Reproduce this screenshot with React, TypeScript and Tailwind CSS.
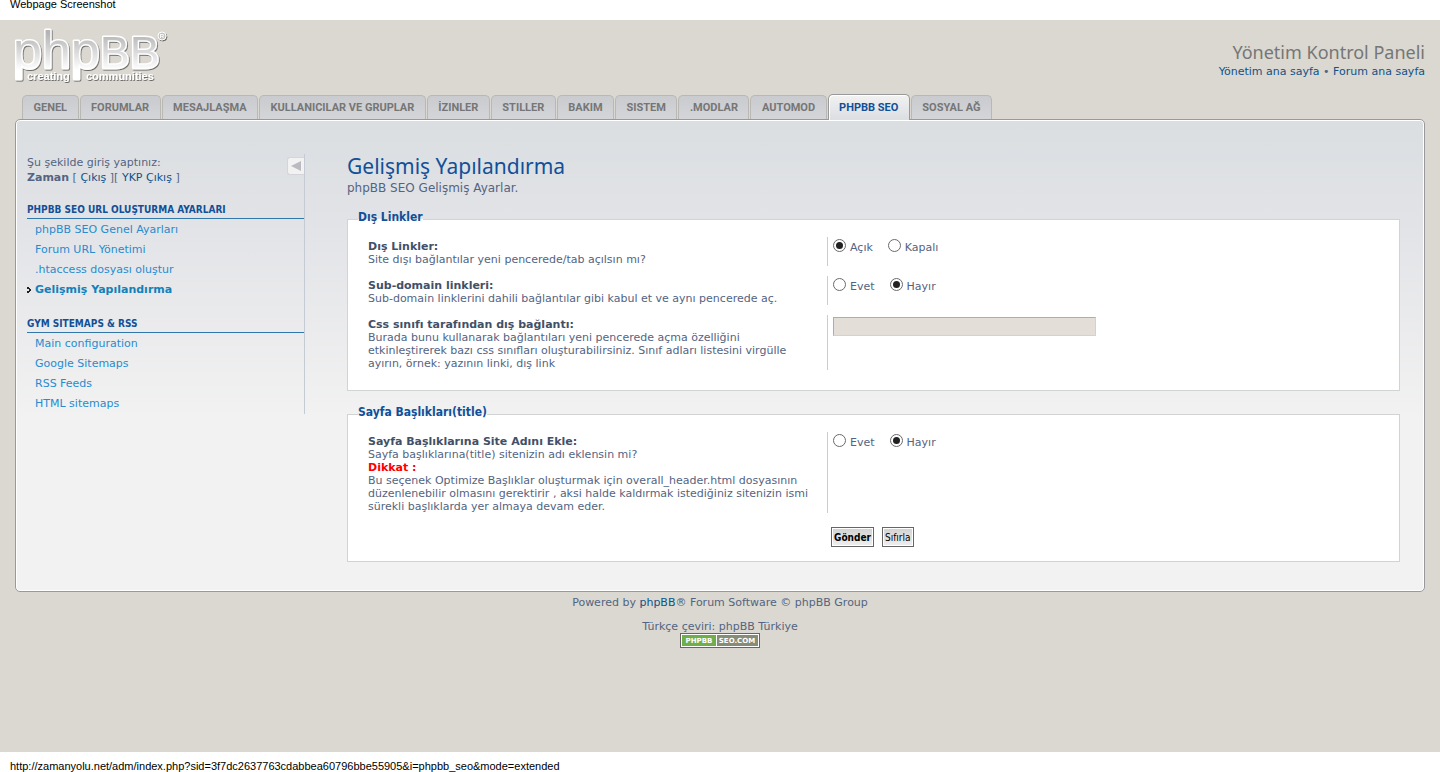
import React from "react";

const tabs = [
  "GENEL",
  "FORUMLAR",
  "MESAJLAŞMA",
  "KULLANICILAR VE GRUPLAR",
  "İZINLER",
  "STILLER",
  "BAKIM",
  "SISTEM",
  ".MODLAR",
  "AUTOMOD",
  "PHPBB SEO",
  "SOSYAL AĞ",
];

const menus = [
  {
    title: "PHPBB SEO URL OLUŞTURMA AYARLARI",
    items: ["phpBB SEO Genel Ayarları", "Forum URL Yönetimi", ".htaccess dosyası oluştur", "Gelişmiş Yapılandırma"],
  },
  {
    title: "GYM SITEMAPS & RSS",
    items: ["Main configuration", "Google Sitemaps", "RSS Feeds", "HTML sitemaps"],
  },
];

function Logo() {
  return (
    <svg width="158" height="66" viewBox="-2 -10 158 66" role="img" aria-label="phpBB creating communities">
      <defs>
        <linearGradient id="face" x1="0" y1="3" x2="0" y2="40" gradientUnits="userSpaceOnUse">
          <stop offset="0" stopColor="#b4b4b4" />
          <stop offset="1" stopColor="#ffffff" />
        </linearGradient>
        <filter id="drop" x="-5%" y="-5%" width="110%" height="120%">
          <feDropShadow dx="0.8" dy="1" stdDeviation="0.5" floodColor="#555555" floodOpacity="0.85" />
        </filter>
      </defs>
      <g filter="url(#drop)" fontFamily="'Liberation Sans', sans-serif">
        <text
          x="-2"
          y="38"
          fontSize="52"
          fill="url(#face)"
          stroke="#ffffff"
          strokeWidth="3"
          strokeLinejoin="round"
          paintOrder="stroke"
        >
          php<tspan fontSize="45">BB</tspan>
        </text>
        <circle cx="147" cy="6" r="4" fill="#c4c3be" stroke="#ffffff" />
        <text x="147" y="8" fontSize="6" fontWeight="bold" textAnchor="middle" fill="#ffffff">
          R
        </text>
      </g>
      <g filter="url(#drop)" fontFamily="'Liberation Sans', sans-serif" fontSize="11" fontWeight="bold" fill="#ffffff">
        <text x="12" y="50">
          creating
        </text>
        <text x="71" y="50">
          communities
        </text>
      </g>
    </svg>
  );
}

function Radio({ name, label, checked }: { name: string; label: string; checked?: boolean }) {
  return (
    <label className="flex items-start gap-1">
      <input
        type="radio"
        name={name}
        defaultChecked={checked}
        className="m-0 grid size-[13px] appearance-none place-items-center rounded-full border border-[#6a6a6a] bg-white before:size-[7px] before:rounded-full checked:before:bg-[#222222]"
      />
      <span className="leading-[18px]">{label}</span>
    </label>
  );
}

function Row({
  title,
  htmlFor,
  lines,
  children,
}: {
  title: string;
  htmlFor?: string;
  lines: React.ReactNode[];
  children: React.ReactNode;
}) {
  return (
    <dl className="mb-[10px] flex">
      <dt className="w-[45%] shrink-0 whitespace-nowrap pt-[3px] leading-[13px]">
        <label htmlFor={htmlFor} className="block font-bold text-[#425067]">
          {title}
        </label>
        {lines.map((line, i) => (
          <span key={i} className="block">
            {line}
          </span>
        ))}
      </dt>
      <dd className="flex flex-1 items-start gap-[15px] border-l border-[#cccccc] pl-[5px] pt-[2px]">{children}</dd>
    </dl>
  );
}

const fieldset = "min-w-0 border border-[#d2d4d4] bg-white pl-5 pr-[11px]";
const legend =
  "-ml-[10px] pb-1 font-['DejaVu_Sans_Condensed','DejaVu_Sans',sans-serif] text-xs leading-4 font-bold text-[#115098]";
const button =
  "h-5 border border-[#666666] bg-linear-to-b from-[#d2d2d2] to-[#efefef] px-[2px] font-['DejaVu_Sans_Condensed','DejaVu_Sans',sans-serif] text-[10px] text-black shadow-[inset_0_0_0_1px_#ffffff]";

export default function App() {
  return (
    <div className="flex min-h-screen flex-col bg-white font-['DejaVu_Sans',sans-serif] text-[11px] text-[#536482]">
      <div className="h-5 px-[10px] font-['Liberation_Sans',sans-serif] leading-2 text-black">Webpage Screenshot</div>

      <div className="flex-1 bg-[#dad8d0] px-[15px]">
        <header className="flex h-[74px] items-start justify-between">
          <a href="#home" className="-ml-[2px]">
            <Logo />
          </a>
          <div className="pt-5 text-right">
            <h1 className="font-['Noto_Sans',sans-serif] text-lg leading-6 text-[#767676]">Yönetim Kontrol Paneli</h1>
            <p className="leading-4">
              <a href="#admin" className="text-[#105289]">
                Yönetim ana sayfa
              </a>{" "}
              •{" "}
              <a href="#forum" className="text-[#105289]">
                Forum ana sayfa
              </a>
            </p>
          </div>
        </header>

        <nav className="relative z-10 -mb-px ml-[7px] flex w-[970px] items-end gap-px font-[Roboto,sans-serif] font-bold">
          {tabs.map((tab) =>
            tab === "PHPBB SEO" ? (
              <a
                key={tab}
                href="#tab"
                aria-current="page"
                className="flex h-[26px] grow items-center justify-center rounded-t-[5px] border border-b-0 border-[#999999] bg-linear-to-b from-[#f2f2f2] to-[#dbdee2] px-[10px] pt-[2px] text-[#115098] shadow-[inset_1px_1px_0_#ffffff]"
              >
                {tab}
              </a>
            ) : (
              <a
                key={tab}
                href="#tab"
                className="mb-px flex h-6 grow items-center justify-center rounded-t-[5px] border border-b-0 border-[#b9b8b4] bg-linear-to-b from-[#c9cbcf] to-[#d3d5d9] px-[10px] pt-[2px] text-[#767676]"
              >
                {tab}
              </a>
            ),
          )}
        </nav>

        <div className="flex rounded-[5px] border border-[#999999] bg-[#f2f2f2] bg-[linear-gradient(to_bottom,#dadee1,#e2e3e7_100px,#f2f2f2_300px)] pb-[29px] pl-[11px] pr-6 pt-[34px] shadow-[inset_0_0_0_1px_#ffffff]">
          <aside className="w-[278px] shrink-0 self-start border-r border-[#c5cbd3]">
            <div className="flex items-start justify-between leading-[15px]">
              <p className="py-px">
                Şu şekilde giriş yaptınız:
                <br />
                <strong>Zaman</strong> [{" "}
                <a href="#logout" className="text-[#105289]">
                  Çıkış
                </a>{" "}
                ][{" "}
                <a href="#admin-logout" className="text-[#105289]">
                  YKP Çıkış
                </a>{" "}
                ]
              </p>
              <button
                type="button"
                aria-label="Menüyü gizle"
                className="mt-[3px] grid h-[18px] w-[17px] place-items-center rounded-l-[3px] border border-r-0 border-[#d3d5d9] bg-[#f2f2f2]"
              >
                <svg width="10" height="10" viewBox="0 0 10 10">
                  <path d="M0 5 10 0V10Z" fill="#b9bbc1" />
                </svg>
              </button>
            </div>
            {menus.map((menu) => (
              <div key={menu.title} className="pt-4">
                <h2 className="mb-px h-[17px] whitespace-nowrap border-b border-[#3077ab] font-['DejaVu_Sans_Condensed','DejaVu_Sans',sans-serif] text-[10px] leading-4 font-bold text-[#115098]">
                  {menu.title}
                </h2>
                <ul>
                  {menu.items.map((item) =>
                    item === "Gelişmiş Yapılandırma" ? (
                      <li key={item} className="flex items-center leading-5">
                        <svg width="8" height="6" viewBox="0 0 8 6" shapeRendering="crispEdges" aria-hidden="true">
                          <path d="M0 0h2v1h1v1h1v2H3v1H2v1H0V4h2V2H0Z" fill="#222222" />
                        </svg>
                        <a href="#item" className="font-bold text-[#1480ba]">
                          {item}
                        </a>
                      </li>
                    ) : (
                      <li key={item} className="pl-2 leading-5">
                        <a href="#item" className="text-[#268cd0]">
                          {item}
                        </a>
                      </li>
                    ),
                  )}
                </ul>
              </div>
            ))}
          </aside>

          <main className="ml-[42px] min-w-0 flex-1">
            <h2 className="font-['Noto_Sans',sans-serif] text-[21px] leading-6 text-[#115098]">
              Gelişmiş Yapılandırma
            </h2>
            <p className="mb-[11px] text-xs leading-5">phpBB SEO Gelişmiş Ayarlar.</p>

            <form onSubmit={(e) => e.preventDefault()}>
              <fieldset className={`${fieldset} pb-[10px]`}>
                <legend className={legend}>Dış Linkler</legend>
                <div className="pt-2">
                  <Row title="Dış Linkler:" lines={["Site dışı bağlantılar yeni pencerede/tab açılsın mı?"]}>
                    <Radio name="external" label="Açık" checked />
                    <Radio name="external" label="Kapalı" />
                  </Row>
                  <Row
                    title="Sub-domain linkleri:"
                    lines={["Sub-domain linklerini dahili bağlantılar gibi kabul et ve aynı pencerede aç."]}
                  >
                    <Radio name="subdomain" label="Evet" />
                    <Radio name="subdomain" label="Hayır" checked />
                  </Row>
                  <Row
                    title="Css sınıfı tarafından dış bağlantı:"
                    htmlFor="css-class"
                    lines={[
                      "Burada bunu kullanarak bağlantıları yeni pencerede açma özelliğini",
                      "etkinleştirerek bazı css sınıfları oluşturabilirsiniz. Sınıf adları listesini virgülle",
                      "ayırın, örnek: yazının linki, dış link",
                    ]}
                  >
                    <input
                      id="css-class"
                      type="text"
                      className="h-[19px] w-[263px] border border-[#d5d3c8] border-l-[#afaeaa] border-t-[#afaeaa] bg-[#e3dfd8] px-1"
                    />
                  </Row>
                </div>
              </fieldset>

              <fieldset className={`${fieldset} mt-[13px] pb-[14px]`}>
                <legend className={legend}>Sayfa Başlıkları(title)</legend>
                <div className="pt-2">
                  <Row
                    title="Sayfa Başlıklarına Site Adını Ekle:"
                    lines={[
                      "Sayfa başlıklarına(title) sitenizin adı eklensin mi?",
                      <strong className="text-[#ff0000]">Dikkat :</strong>,
                      "Bu seçenek Optimize Başlıklar oluşturmak için overall_header.html dosyasının",
                      "düzenlenebilir olmasını gerektirir , aksi halde kaldırmak istediğiniz sitenizin ismi",
                      "sürekli başlıklarda yer almaya devam eder.",
                    ]}
                  >
                    <Radio name="sitename" label="Evet" />
                    <Radio name="sitename" label="Hayır" checked />
                  </Row>
                </div>
                <div className="ml-[45%] flex gap-2 pl-1 pt-1">
                  <button type="submit" className={`${button} font-bold`}>
                    Gönder
                  </button>
                  <button type="reset" className={button}>
                    Sıfırla
                  </button>
                </div>
              </fieldset>
            </form>
          </main>
        </div>

        <footer className="flex flex-col items-center pt-[5px] leading-3">
          <p>
            Powered by{" "}
            <a href="#phpbb" className="text-[#105289]">
              phpBB
            </a>
            ® Forum Software © phpBB Group
          </p>
          <p className="pt-3">Türkçe çeviri: phpBB Türkiye</p>
          <a href="#seo">
            <svg width="80" height="15" viewBox="0 0 80 15" role="img" aria-label="phpBB SEO">
              <rect width="80" height="15" fill="#666666" />
              <rect x="1" y="1" width="78" height="13" fill="#ffffff" />
              <rect x="2" y="2" width="34" height="11" fill="#70ae4c" />
              <rect x="37" y="2" width="41" height="11" fill="#878c76" />
              <g fontFamily="'DejaVu Sans', sans-serif" fontSize="7" fontWeight="bold" fill="#ffffff" textAnchor="middle">
                <text x="19" y="10">
                  PHPBB
                </text>
                <text x="57" y="10">
                  SEO.COM
                </text>
              </g>
            </svg>
          </a>
        </footer>
      </div>

      <div className="h-5 px-[10px] font-['Liberation_Sans',sans-serif] leading-7 text-black">
        http://zamanyolu.net/adm/index.php?sid=3f7dc2637763cdabbea60796bbe55905&amp;i=phpbb_seo&amp;mode=extended
      </div>
    </div>
  );
}
